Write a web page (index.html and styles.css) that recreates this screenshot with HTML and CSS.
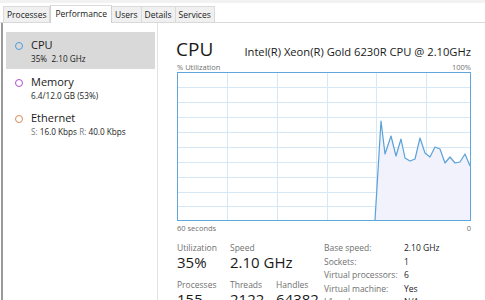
FILE: index.html
```html
<!DOCTYPE html>
<html lang="en">
<head>
  <meta charset="UTF-8" />
  <title>Task Manager - Performance</title>
  <link rel="stylesheet" href="styles.css">
</head>
<body>
  <div class="window">
    <div class="menubar"></div>

    <div class="tabs">
      <span class="tab">Processes</span>
      <span class="tab active">Performance</span>
      <span class="tab">Users</span>
      <span class="tab">Details</span>
      <span class="tab">Services</span>
    </div>

    <div class="main">
      <aside class="sidebar">
        <div class="item selected">
          <span class="dot cpu"></span>
          <div class="item-text">
            <div class="item-title">CPU</div>
            <div class="item-sub">35%&nbsp; 2.10 GHz</div>
          </div>
        </div>
        <div class="item">
          <span class="dot mem"></span>
          <div class="item-text">
            <div class="item-title">Memory</div>
            <div class="item-sub">6.4/12.0 GB (53%)</div>
          </div>
        </div>
        <div class="item">
          <span class="dot eth"></span>
          <div class="item-text">
            <div class="item-title">Ethernet</div>
            <div class="item-sub"><span class="muted">S:</span> 16.0 Kbps <span class="muted">R:</span> 40.0 Kbps</div>
          </div>
        </div>
      </aside>

      <section class="detail">
        <div class="detail-head">
          <h1>CPU</h1>
          <span class="cpu-name">Intel(R) Xeon(R) Gold 6230R CPU @ 2.10GHz</span>
        </div>

        <div class="axis">
          <span>% Utilization</span>
          <span>100%</span>
        </div>

        <svg class="graph" width="294" height="149" viewBox="0 0 294 149">
          <g stroke="#d6e7f5" stroke-width="1">
            <line x1="50.5" y1="0" x2="50.5" y2="149" />
            <line x1="100.5" y1="0" x2="100.5" y2="149" />
            <line x1="150.5" y1="0" x2="150.5" y2="149" />
            <line x1="199.5" y1="0" x2="199.5" y2="149" />
            <line x1="249.5" y1="0" x2="249.5" y2="149" />
            <line x1="0" y1="15.5" x2="294" y2="15.5" />
            <line x1="0" y1="30.5" x2="294" y2="30.5" />
            <line x1="0" y1="45.5" x2="294" y2="45.5" />
            <line x1="0" y1="60.5" x2="294" y2="60.5" />
            <line x1="0" y1="75.5" x2="294" y2="75.5" />
            <line x1="0" y1="90.5" x2="294" y2="90.5" />
            <line x1="0" y1="105.5" x2="294" y2="105.5" />
            <line x1="0" y1="120.5" x2="294" y2="120.5" />
            <line x1="0" y1="134.5" x2="294" y2="134.5" />
          </g>
          <polygon fill="#f1f2fb" points="198,148 204,49 208,82 214,64 219,84 224,67 228,86 233,89 238,87 243,66 248,81 253,85 258,75 263,77 268,91 273,85 278,91 283,90 288,82 293,94 293,148" />
          <polyline fill="none" stroke="#5aa2d8" stroke-width="1.2" stroke-linejoin="round" points="198,148 204,49 208,82 214,64 219,84 224,67 228,86 233,89 238,87 243,66 248,81 253,85 258,75 263,77 268,91 273,85 278,91 283,90 288,82 293,94" />
          <rect x="0.5" y="0.5" width="293" height="148" fill="none" stroke="#5fa6dc" stroke-width="1" />
        </svg>

        <div class="axis bottom">
          <span>60 seconds</span>
          <span>0</span>
        </div>

        <div class="stats">
          <div class="live">
            <div class="stat">
              <div class="label">Utilization</div>
              <div class="value">35%</div>
            </div>
            <div class="stat">
              <div class="label">Speed</div>
              <div class="value">2.10 GHz</div>
            </div>
            <div class="stat"></div>
            <div class="stat">
              <div class="label">Processes</div>
              <div class="value">155</div>
            </div>
            <div class="stat">
              <div class="label">Threads</div>
              <div class="value">2122</div>
            </div>
            <div class="stat">
              <div class="label">Handles</div>
              <div class="value">64382</div>
            </div>
          </div>

          <dl class="specs">
            <dt>Base speed:</dt><dd>2.10 GHz</dd>
            <dt>Sockets:</dt><dd>1</dd>
            <dt>Virtual processors:</dt><dd>6</dd>
            <dt>Virtual machine:</dt><dd>Yes</dd>
            <dt>L1 cache:</dt><dd>N/A</dd>
          </dl>
        </div>
      </section>
    </div>
  </div>
</body>
</html>
```

FILE: styles.css
```css
body {
  margin: 0;
  padding: 0;
  background: #ffffff;
  font-family: 'Open Sans', 'Noto Sans', sans-serif;
  color: #1a1a1a;
  overflow: hidden;
}

.window {
  width: 485px;
  height: 300px;
  overflow: hidden;
}

.menubar {
  height: 3px;
  background: #f2f2f2;
}

/* Tabs */
.tabs {
  display: flex;
  align-items: flex-end;
  height: 19px;
  padding-left: 3px;
  border-bottom: 1px solid #d9d9d9;
}

.tab {
  height: 15px;
  line-height: 15px;
  padding: 0 3px;
  font-size: 8.5px;
  color: #1a1a1a;
  background: #f0f0f0;
  border: 1px solid #dadada;
  border-bottom: none;
}

.tab + .tab {
  border-left: none;
}

.tab.active {
  height: 17px;
  line-height: 15px;
  padding: 0 4px;
  background: #ffffff;
  border-left: 1px solid #d0d0d0;
  border-right: 1px solid #d0d0d0;
  margin-bottom: -1px;
  position: relative;
}

/* Main area */
.main {
  display: flex;
  height: 277px;
}

.sidebar {
  width: 157px;
  border-left: 2px solid #9a9a9a;
  border-right: 1px solid #e3e3e3;
  margin-left: 1px;
  padding: 9px 0 0 3px;
  box-sizing: border-box;
}

.item {
  display: flex;
  align-items: flex-start;
  width: 149px;
  height: 36.5px;
  box-sizing: border-box;
  padding: 7px 0 0 9px;
}

.item.selected {
  background: #d9d9d9;
}

.dot {
  width: 6px;
  height: 6px;
  border-radius: 50%;
  border: 1.3px solid;
  margin-top: 3px;
  margin-right: 8px;
  flex-shrink: 0;
}

.dot.cpu { border-color: #4c9fda; }
.dot.mem { border-color: #b04ed0; }
.dot.eth { border-color: #dc8a52; }

.item-title {
  font-size: 11px;
  line-height: 12px;
}

.item-sub {
  font-size: 8.2px;
  line-height: 10px;
  margin-top: 3px;
}

.muted {
  color: #7a7a7a;
}

/* Detail */
.detail {
  flex: 1;
  padding: 15px 0 0 19px;
}

.detail-head {
  display: flex;
  align-items: baseline;
  justify-content: space-between;
  width: 295px;
  margin-left: -1px;
}

.detail-head h1 {
  margin: 0;
  font-weight: 400;
  font-size: 19px;
  line-height: 22px;
}

.cpu-name {
  font-size: 11.2px;
}

.axis {
  display: flex;
  justify-content: space-between;
  width: 294px;
  font-size: 7.5px;
  color: #707070;
  line-height: 10px;
  margin-top: 2px;
}

.axis.bottom {
  margin-top: 2px;
}

.graph {
  display: block;
}

.stats {
  display: flex;
  align-items: flex-start;
  margin-top: 9px;
}

.live {
  display: grid;
  grid-template-columns: 53px 46px 48px;
  row-gap: 8px;
}

.label {
  font-size: 8.5px;
  color: #707070;
  line-height: 11px;
}

.value {
  font-size: 15px;
  line-height: 18px;
  white-space: nowrap;
}

.specs {
  display: grid;
  grid-template-columns: 80px auto;
  align-content: start;
  row-gap: 2.5px;
  margin: 0;
  font-size: 8.5px;
  line-height: 11px;
}

.specs dt {
  color: #707070;
  white-space: nowrap;
}

.specs dd {
  margin: 0;
  white-space: nowrap;
}
```
